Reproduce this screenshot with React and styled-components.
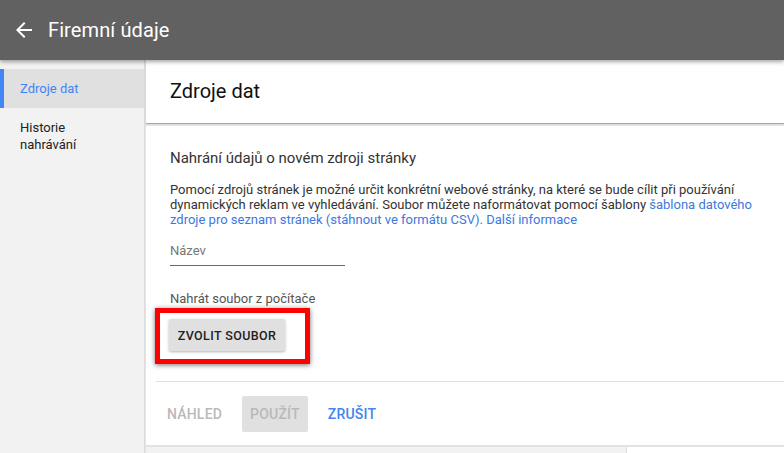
import styled, { createGlobalStyle } from "styled-components";

const GlobalStyle = createGlobalStyle`
  html, body {
    margin: 0;
    padding: 0;
    background: #fff;
    font-family: Roboto, "Liberation Sans", Arial, sans-serif;
  }
  * {
    box-sizing: border-box;
  }
`;

const Page = styled.div`
  display: flex;
  flex-direction: column;
  width: 784px;
  height: 453px;
  overflow: hidden;
`;

const TopBar = styled.header`
  position: relative;
  z-index: 2;
  flex: 0 0 60px;
  display: flex;
  align-items: center;
  padding-left: 12px;
  background: #616161;
  color: #fff;
  box-shadow: 0 2px 4px rgba(0, 0, 0, 0.35);

  h1 {
    margin: 0 0 0 12px;
    font-size: 20px;
    font-weight: 400;
    letter-spacing: 0.1px;
  }
`;

const Body = styled.div`
  flex: 1;
  display: flex;
  min-height: 0;
`;

const Sidebar = styled.nav`
  flex: 0 0 145px;
  padding-top: 9px;
  background: #f2f2f2;
  border-right: 1px solid #dcdcdc;
`;

const NavItem = styled.div`
  display: flex;
  align-items: center;
  min-height: 39px;
  padding: ${({ active }) => (active ? "0 10px 0 16px" : "9px 10px 9px 20px")};
  font-size: 13px;
  line-height: ${({ active }) => (active ? 19 : 17)}px;
  color: ${({ active }) => (active ? "#4285f4" : "#212121")};
  background: ${({ active }) => (active ? "#e0e0e0" : "transparent")};
  border-left: ${({ active }) => (active ? "4px solid #4285f4" : "none")};
  margin-bottom: 2px;
`;

const Main = styled.main`
  flex: 1;
  display: flex;
  flex-direction: column;
  border-left: 1px solid #e4e4e4;
  background: #f2f2f2;
`;

const TitleCard = styled.div`
  flex: 0 0 64px;
  display: flex;
  align-items: center;
  padding-left: 24px;
  padding-bottom: 1px;
  background: #fff;
  border-bottom: 1px solid #a8a8a8;
  box-shadow: 0 1px 2px rgba(0, 0, 0, 0.15);

  h2 {
    margin: 0;
    font-size: 20px;
    font-weight: 400;
    color: #111;
  }
`;

const ContentCard = styled.section`
  margin-top: 2px;
  flex: 0 0 321px;
  background: #fff;
  border-bottom: 2px solid #e2e2e2;
`;

const Form = styled.div`
  padding: 22px 24px 0 24px;
  color: #333;
`;

const Heading = styled.h3`
  margin: 0;
  font-size: 15px;
  line-height: 20px;
  font-weight: 400;
  color: #333;
`;

const Description = styled.p`
  margin: 14px 0 0;
  font-size: 13px;
  line-height: 15px;
  color: #333;

  a {
    color: #3d78de;
    text-decoration: none;
  }
`;

const Field = styled.div`
  width: 175px;
  margin-top: 16px;
  padding-bottom: 7px;
  border-bottom: 1px solid #c8472e;
  font-size: 13px;
  line-height: 15px;
  color: #777;
`;

const Label = styled.div`
  margin-top: 25px;
  font-size: 13px;
  line-height: 15px;
  color: #555;
`;

const Highlight = styled.div`
  display: inline-block;
  margin: 2px 0 0 -15px;
  padding: 6px 20px 8px 9px;
  border: 5px solid #ff0000;
  box-shadow: 0 1px 5px rgba(0, 0, 0, 0.55);
`;

const RaisedButton = styled.button`
  display: block;
  height: 32px;
  width: 116px;
  padding: 0;
  border: none;
  border-radius: 2px;
  background: #e0e0e0;
  box-shadow: 0 1px 3px rgba(0, 0, 0, 0.3);
  font-family: inherit;
  font-size: 12.5px;
  font-weight: 500;
  letter-spacing: 0.4px;
  color: #212121;
`;

const Actions = styled.div`
  display: flex;
  align-items: center;
  margin: 17px 0 0 10px;
  padding: 14px 0 0 3px;
  border-top: 1px solid #e0e0e0;
`;

const FlatButton = styled.button`
  height: 36px;
  padding: 0 ${({ pad }) => pad || 8}px;
  margin-right: ${({ gap }) => gap || 0}px;
  border: none;
  border-radius: 2px;
  background: ${({ filled }) => (filled ? "#e0e0e0" : "transparent")};
  font-family: inherit;
  font-size: 14px;
  font-weight: 500;
  letter-spacing: 0.2px;
  color: ${({ primary }) => (primary ? "#4285f4" : "#b9b9b9")};
`;

const BottomStrip = styled.div`
  flex: 1;
  display: flex;

  div:first-child {
    width: 481px;
    background: #f2f2f2;
    border-right: 1px solid #dedede;
  }
  div:last-child {
    flex: 1;
    background: #fff;
  }
`;

const BackArrow = () => (
  <svg width="24" height="24" viewBox="0 0 24 24" fill="#fff">
    <path d="M20 11H7.83l5.59-5.59L12 4l-8 8 8 8 1.41-1.41L7.83 13H20v-2z" />
  </svg>
);

export default function App() {
  return (
    <Page>
      <GlobalStyle />
      <TopBar>
        <BackArrow />
        <h1>Firemní údaje</h1>
      </TopBar>
      <Body>
        <Sidebar>
          <NavItem active>Zdroje dat</NavItem>
          <NavItem>
            Historie
            <br />
            nahrávání
          </NavItem>
        </Sidebar>
        <Main>
          <TitleCard>
            <h2>Zdroje dat</h2>
          </TitleCard>
          <ContentCard>
            <Form>
              <Heading>Nahrání údajů o novém zdroji stránky</Heading>
              <Description>
                Pomocí zdrojů stránek je možné určit konkrétní webové stránky, na které se bude cílit při používání
                <br />
                dynamických reklam ve vyhledávání. Soubor můžete naformátovat pomocí šablony{" "}
                <a href="#">šablona datového</a>
                <br />
                <a href="#">zdroje pro seznam stránek (stáhnout ve formátu CSV).</a>{" "}
                <a href="#">Další informace</a>
              </Description>
              <Field>Název</Field>
              <Label>Nahrát soubor z počítače</Label>
              <Highlight>
                <RaisedButton>ZVOLIT SOUBOR</RaisedButton>
              </Highlight>
            </Form>
            <Actions>
              <FlatButton gap={12}>NÁHLED</FlatButton>
              <FlatButton filled gap={12}>POUŽÍT</FlatButton>
              <FlatButton primary>ZRUŠIT</FlatButton>
            </Actions>
          </ContentCard>
          <BottomStrip>
            <div />
            <div />
          </BottomStrip>
        </Main>
      </Body>
    </Page>
  );
}
